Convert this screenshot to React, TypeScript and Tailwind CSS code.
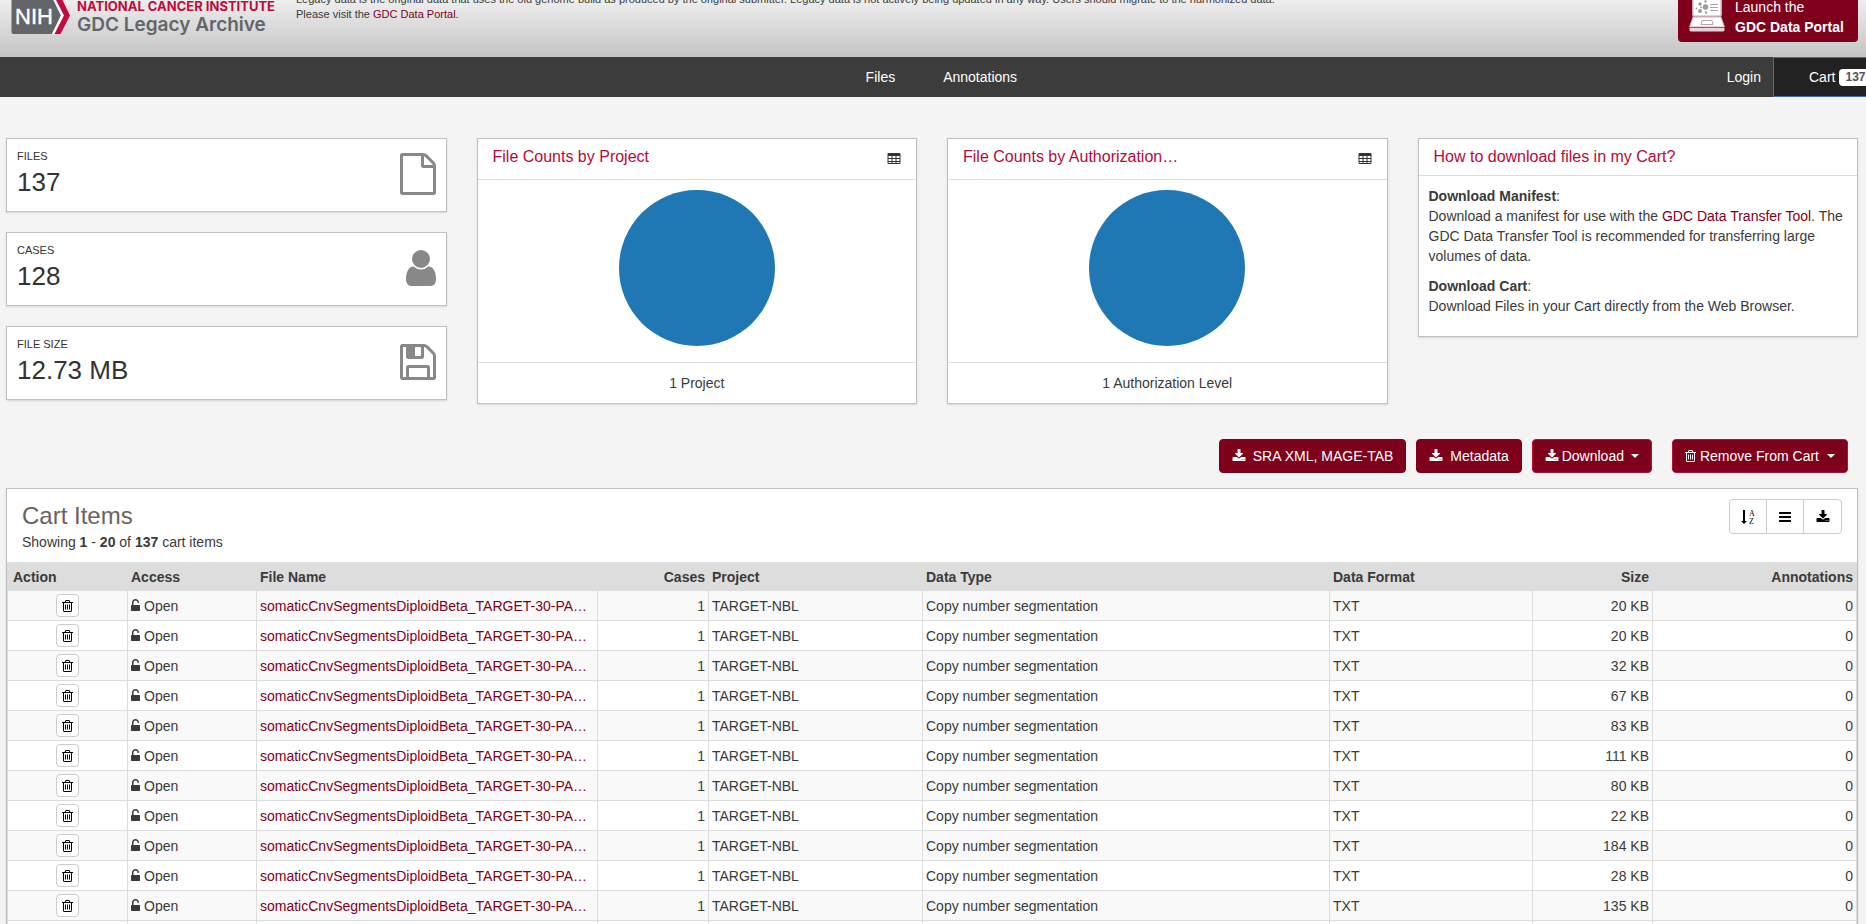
import type { ReactNode } from "react";

type IconProps = { path: string; viewBox?: string; className?: string };

function Icon({ path, viewBox = "0 0 1792 1792", className = "h-[14px] w-[14px]" }: IconProps) {
  return (
    <svg viewBox={viewBox} className={`${className} shrink-0`} fill="currentColor" aria-hidden="true">
      <path fillRule="evenodd" d={path} />
    </svg>
  );
}

const DOWNLOAD =
  "M1344 1344q0-26-19-45t-45-19-45 19-19 45 19 45 45 19 45-19 19-45zm256 0q0-26-19-45t-45-19-45 19-19 45 19 45 45 19 45-19 19-45zm128-224v320q0 40-28 68t-68 28h-1472q-40 0-68-28t-28-68v-320q0-40 28-68t68-28h465l135 136q58 56 136 56t136-56l136-136h464q40 0 68 28t28 68zm-325-569q17 41-14 70l-448 448q-18 19-45 19t-45-19l-448-448q-31-29-14-70 17-39 59-39h256v-448q0-26 19-45t45-19h256q26 0 45 19t19 45v448h256q42 0 59 39z";
const FILE =
  "M1596 380q28 28 48 76t20 88v1152q0 40-28 68t-68 28h-1344q-40 0-68-28t-28-68v-1600q0-40 28-68t68-28h896q40 0 88 20t76 48zm-444-244v376h376q-10-29-22-41l-313-313q-12-12-41-22zm384 1528v-1024h-416q-40 0-68-28t-28-68v-416h-768v1536h1280z";
const USER =
  "M1536 1399q0 109-62.5 187t-150.5 78h-854q-88 0-150.5-78t-62.5-187q0-85 8.5-160.5t31.5-152 58.5-131 94-89 134.5-34.5q131 128 313 128t313-128q76 0 134.5 34.5t94 89 58.5 131 31.5 152 8.5 160.5zm-256-887q0 159-112.5 271.5t-271.5 112.5-271.5-112.5-112.5-271.5 112.5-271.5 271.5-112.5 271.5 112.5 112.5 271.5z";
const FLOPPY =
  "M512 1536h768v-384h-768v384zm896 0h128v-896q0-14-10-38.5t-20-34.5l-281-281q-10-10-34-20t-39-10v416q0 40-28 68t-68 28h-576q-40 0-68-28t-28-68v-416h-128v1280h128v-416q0-40 28-68t68-28h832q40 0 68 28t28 68v416zm-384-928v-320q0-13-9.5-22.5t-22.5-9.5h-192q-13 0-22.5 9.5t-9.5 22.5v320q0 13 9.5 22.5t22.5 9.5h192q13 0 22.5-9.5t9.5-22.5zm640 32v928q0 40-28 68t-68 28h-1344q-40 0-68-28t-28-68v-1344q0-40 28-68t68-28h928q40 0 88 20t76 48l280 280q28 28 48 76t20 88z";
const TRASH =
  "M704 736v576q0 14-9 23t-23 9h-64q-14 0-23-9t-9-23v-576q0-14 9-23t23-9h64q14 0 23 9t9 23zm256 0v576q0 14-9 23t-23 9h-64q-14 0-23-9t-9-23v-576q0-14 9-23t23-9h64q14 0 23 9t9 23zm256 0v576q0 14-9 23t-23 9h-64q-14 0-23-9t-9-23v-576q0-14 9-23t23-9h64q14 0 23 9t9 23zm128 724v-948h-896v948q0 22 7 40.5t14.5 27 10.5 8.5h832q3 0 10.5-8.5t14.5-27 7-40.5zm-672-1076h448l-48-117q-7-9-17-11h-317q-10 2-17 11zm928 32v64q0 14-9 23t-23 9h-96v948q0 83-47 143.5t-113 60.5h-832q-66 0-113-58.5t-47-141.5v-952h-96q-14 0-23-9t-9-23v-64q0-14 9-23t23-9h309l70-167q15-37 54-63t79-26h320q40 0 79 26t54 63l70 167h309q14 0 23 9t9 23z";
const UNLOCK =
  "M1376 768q40 0 68 28t28 68v576q0 40-28 68t-68 28h-960q-40 0-68-28t-28-68v-576q0-40 28-68t68-28h32v-320q0-185 131.5-316.5t316.5-131.5 316.5 131.5 131.5 316.5q0 26-19 45t-45 19h-64q-26 0-45-19t-19-45q0-106-75-181t-181-75-181 75-75 181v320h736z";
const TABLE =
  "M224 128h1344q66 0 113 47t47 113v1088q0 66-47 113t-113 47h-1344q-66 0-113-47t-47-113v-1088q0-66 47-113t113-47zM192 512v256h384v-256zM704 512v256h384v-256zM1216 512v256h384v-256zM192 896v256h384v-256zM704 896v256h384v-256zM1216 896v256h384v-256zM192 1280v128h384v-128zM704 1280v128h384v-128zM1216 1280v128h384v-128z";
const BARS =
  "M192 1280h1408q64 0 64 64v128q0 64-64 64h-1408q-64 0-64-64v-128q0-64 64-64zM192 768h1408q64 0 64 64v128q0 64-64 64h-1408q-64 0-64-64v-128q0-64 64-64zM192 256h1408q64 0 64 64v128q0 64-64 64h-1408q-64 0-64-64v-128q0-64 64-64z";

const TRASH_BOX = "192 0 1408 1792";
const LINK = "text-[#7f001b] hover:underline";
const PANEL = "border border-[#c0c0c0] bg-white shadow-[0_1px_2px_rgba(0,0,0,0.12)]";

function SortAlphaIcon() {
  return (
    <svg viewBox="0 0 14 16" className="h-4 w-[14px]" fill="currentColor" aria-hidden="true">
      <path d="M2 1h2v11h2L3 15 0 12h2z" />
      <text x="8" y="7" fontSize="8" fontFamily="Liberation Serif, serif">A</text>
      <text x="8" y="15" fontSize="8" fontFamily="Liberation Serif, serif">Z</text>
    </svg>
  );
}

function Caret() {
  return (
    <svg viewBox="0 0 8 4" className="h-1 w-2 shrink-0" fill="currentColor" aria-hidden="true">
      <path d="M0 0h8L4 4z" />
    </svg>
  );
}

function NihMark() {
  return (
    <svg viewBox="0 -3 60 37" className="mb-[2px] h-[37px] w-[60px] shrink-0" aria-hidden="true">
      <path d="M2-3H41L50 15.500L41 34H2.500Q0.500 34 0.500 32V-1Q0.500-3 2-3z" fill="#636569" />
      <path d="M41-3L50 15.500L41 34H43.500L53 15.500L43.500-3z" fill="#fff" />
      <path d="M43.500-3H50L59 15.500L49.500 34H43.500L53 15.500z" fill="#c20a3c" />
      <text x="4" y="24" fontSize="22" fill="#fff" stroke="#fff" strokeWidth="0.4" fontFamily="Liberation Sans, sans-serif">
        NIH
      </text>
    </svg>
  );
}

function LaptopIcon() {
  return (
    <svg viewBox="0 0 36 42" className="h-[42px] w-9 shrink-0" aria-hidden="true">
      <rect x="3" y="2" width="30" height="25" rx="2" fill="#c9a9b1" />
      <rect x="4.500" y="3.500" width="27" height="22" fill="#fff" />
      <g fill="#9c9c9c">
        <circle cx="11" cy="14" r="1.800" />
        <circle cx="16.500" cy="17" r="2.700" />
        <circle cx="11" cy="21" r="2" />
        <circle cx="7.500" cy="18.500" r="1" />
        <circle cx="16.500" cy="11.500" r="1.200" />
        <circle cx="17" cy="22.500" r="1.200" />
        <circle cx="12" cy="17.500" r="1" />
      </g>
      <path d="M21 14.500h8M21 17.500h8M21 20.500h8" stroke="#a5a5a5" strokeWidth="1" />
      <path d="M4 27h28l3.500 10h-35z" fill="#fff" stroke="#c9a9b1" strokeWidth="1" />
      <path d="M13 30.500h10l1 4H12z" fill="#fff" stroke="#b8a0a6" strokeWidth="1" />
      <path d="M0.500 38h35v2q0 1.500-2 1.500h-31q-2 0-2-1.500z" fill="#e6d5d9" />
    </svg>
  );
}

function StatCard({ label, value, icon }: { label: string; value: string; icon: ReactNode }) {
  return (
    <div className={`${PANEL} flex justify-between px-[10px] pb-[14px] pt-[11px] text-[#333]`}>
      <div>
        <div className="text-[11px] leading-[12px]">{label}</div>
        <div className="pt-[5px] text-[26px] leading-[30px]">{value}</div>
      </div>
      <div className="pt-[3px] text-[#888]">{icon}</div>
    </div>
  );
}

function PieCard({ title, footer }: { title: string; footer: string }) {
  return (
    <section className={PANEL}>
      <header className="flex h-[41px] items-start justify-between border-b border-[#ddd] px-[15px]">
        <h2 className="pt-[7px] text-[16px] leading-[22px] text-[#b8093b]">{title}</h2>
        <button type="button" aria-label={`Show ${title} as table`} className="mt-[13px] text-[#333]">
          <Icon path={TABLE} />
        </button>
      </header>
      <div className="flex justify-center pb-4 pt-[10px]">
        <svg viewBox="0 0 156 156" className="h-[156px] w-[156px]" role="img" aria-label={footer}>
          <circle cx="78" cy="78" r="78" fill="#1f77b4" />
        </svg>
      </div>
      <footer className="border-t border-[#ddd] py-[10px] text-center">{footer}</footer>
    </section>
  );
}

const ACTION = "flex h-[34px] items-center rounded border bg-[#7f001b] px-3 text-white";

const SIZES = ["20 KB", "20 KB", "32 KB", "67 KB", "83 KB", "111 KB", "80 KB", "22 KB", "184 KB", "28 KB", "135 KB", "20 KB"];

const HEAD = "pl-1 pr-[3px]";
const CELL = "border-l border-[#ddd] px-[3px]";
const TOOL = "flex h-[33px] w-[37px] items-center justify-center";

export default function App() {
  return (
    <div className="h-screen overflow-hidden bg-[#f4f4f4] font-['Liberation_Sans',Arial,sans-serif] text-[14px] leading-5 text-[#3a3a3a]">
      <header className="flex h-[57px] items-end justify-between overflow-hidden bg-linear-to-b from-[#eee] to-[#c4c4c4] pl-[11px] pr-2">
        <div className="flex items-end">
          <a href="#home" className="flex w-[285px] items-end gap-[6px] pb-[21px] font-['Inter',sans-serif]">
            <NihMark />
            <span className="flex flex-col whitespace-nowrap">
              <span className="text-[13px] font-bold leading-[15px] text-[#c20a3c]">NATIONAL CANCER INSTITUTE</span>
              <span className="text-[19px] font-semibold leading-[22px] text-[#636569]">GDC Legacy Archive</span>
            </span>
          </a>
          <p className="pb-[35px] text-[11px] leading-[15px]">
            Legacy data is the original data that uses the old genome build as produced by the original submitter. Legacy data is not
            actively being updated in any way. Users should migrate to the harmonized data.
            <br />
            Please visit the <a href="#portal" className={LINK}>GDC Data Portal</a>.
          </p>
        </div>
        <a href="#launch" className="mb-[15px] flex w-[180px] items-end gap-[10px] rounded bg-[#7f001b] pl-[11px] text-white">
          <span className="pb-[10px]"><LaptopIcon /></span>
          <span className="pb-[5px]">
            Launch the<br />
            <b>GDC Data Portal</b>
          </span>
        </a>
      </header>

      <nav className="flex h-10 overflow-hidden bg-[#3c3c3c] text-white">
        <div className="flex flex-1 items-center justify-center gap-12 pl-4">
          <span className="flex-1" />
          <a href="#files">Files</a>
          <a href="#annotations">Annotations</a>
          <span className="flex-1" />
        </div>
        <div className="-ml-[140px] -mr-3 flex items-center">
          <a href="#login" className="pr-3">Login</a>
          <a href="#cart" className="flex h-10 w-[105px] items-center gap-1 border border-[#3f6fb5] bg-[#222] pl-[35px]">
            Cart
            <span className="mt-px rounded bg-white px-[6px] text-[12px] font-bold leading-[17px] text-[#555]">137</span>
          </a>
        </div>
      </nav>

      <main className="pl-[6px] pr-2 pt-[41px]">
        <div className="grid grid-cols-4 items-start gap-x-[30px]">
          <div className="flex flex-col gap-5">
            <StatCard label="FILES" value="137" icon={<Icon path={FILE} viewBox="128 0 1536 1792" className="h-[42px] w-9" />} />
            <StatCard label="CASES" value="128" icon={<Icon path={USER} viewBox="256 0 1280 1792" className="h-[42px] w-[30px]" />} />
            <StatCard label="FILE SIZE" value="12.73 MB" icon={<Icon path={FLOPPY} viewBox="128 0 1536 1792" className="h-[42px] w-9" />} />
          </div>
          <PieCard title="File Counts by Project" footer="1 Project" />
          <PieCard title="File Counts by Authorization…" footer="1 Authorization Level" />
          <section className={PANEL}>
            <h2 className="border-b border-[#ddd] px-[15px] py-[7px] text-[16px] leading-[22px] text-[#b8093b]">
              How to download files in my Cart?
            </h2>
            <div className="space-y-[10px] px-[10px] pb-5 pt-[10px]">
              <p>
                <b>Download Manifest</b>:<br />
                Download a manifest for use with the <a href="#tool" className={LINK}>GDC Data Transfer Tool</a>. The GDC Data
                Transfer Tool is recommended for transferring large volumes of data.
              </p>
              <p>
                <b>Download Cart</b>:<br />
                Download Files in your Cart directly from the Web Browser.
              </p>
            </div>
          </section>
        </div>

        <div className="mt-[35px] flex justify-end gap-[10px] pr-[10px]">
          <button type="button" className={`${ACTION} gap-[7px] border-[#7f001b]`}>
            <Icon path={DOWNLOAD} />SRA XML, MAGE-TAB
          </button>
          <button type="button" className={`${ACTION} gap-[7px] border-[#7f001b]`}>
            <Icon path={DOWNLOAD} />Metadata
          </button>
          <button type="button" className={`${ACTION} gap-[3px] border-[#b0103a]`}>
            <Icon path={DOWNLOAD} />Download<span className="ml-1"><Caret /></span>
          </button>
          <button type="button" className={`${ACTION} ml-[10px] gap-1 border-[#b0103a]`}>
            <Icon path={TRASH} viewBox={TRASH_BOX} className="h-[14px] w-[11px]" />Remove From Cart<span className="ml-1"><Caret /></span>
          </button>
        </div>

        <section className={`${PANEL} mt-[15px]`}>
          <div className="flex items-start justify-between px-[15px] pb-[10px] pt-[10px]">
            <div>
              <h1 className="pb-[3px] pt-1 text-[24px] leading-[26px] text-[#6b6262]">Cart Items</h1>
              <p>
                Showing <b>1</b> - <b>20</b> of <b>137</b> cart items
              </p>
            </div>
            <div className="flex divide-x divide-[#ccc] rounded border border-[#ccc] text-black">
              <button type="button" aria-label="Sort" className={TOOL}><SortAlphaIcon /></button>
              <button type="button" aria-label="Arrange columns" className={TOOL}><Icon path={BARS} /></button>
              <button type="button" aria-label="Export" className={TOOL}><Icon path={DOWNLOAD} /></button>
            </div>
          </div>
          <table className="w-full table-fixed border-separate border-spacing-0 text-left">
            <colgroup>
              <col className="w-[120px]" />
              <col className="w-[129px]" />
              <col className="w-[341px]" />
              <col className="w-[111px]" />
              <col className="w-[214px]" />
              <col className="w-[407px]" />
              <col className="w-[203px]" />
              <col className="w-[120px]" />
              <col className="w-[205px]" />
            </colgroup>
            <thead>
              <tr className="h-[29px] bg-[#ddd]">
                <th className="px-[6px]">Action</th>
                <th className={HEAD}>Access</th>
                <th className={HEAD}>File Name</th>
                <th className={`${HEAD} text-right`}>Cases</th>
                <th className={HEAD}>Project</th>
                <th className={HEAD}>Data Type</th>
                <th className={HEAD}>Data Format</th>
                <th className={`${HEAD} text-right`}>Size</th>
                <th className="px-1 text-right">Annotations</th>
              </tr>
            </thead>
            <tbody>
              {SIZES.map((size, i) => (
                <tr key={i} className="h-[30px] odd:bg-[#f9f9f9] [&>td]:border-b">
                  <td className={CELL}>
                    <button type="button" aria-label="Remove from cart" className="mx-auto flex h-[23px] w-[23px] items-center justify-center rounded border border-[#ccc] bg-white text-black">
                      <Icon path={TRASH} viewBox={TRASH_BOX} className="h-[14px] w-[11px]" />
                    </button>
                  </td>
                  <td className={CELL}>
                    <span className="flex items-center gap-1">
                      <Icon path={UNLOCK} viewBox="320 0 1152 1792" className="h-[14px] w-[9px]" />Open
                    </span>
                  </td>
                  <td className={`${CELL} truncate`}>
                    <a href="#file" className={LINK}>somaticCnvSegmentsDiploidBeta_TARGET-30-PA…</a>
                  </td>
                  <td className={`${CELL} text-right`}>1</td>
                  <td className={CELL}>TARGET-NBL</td>
                  <td className={CELL}>Copy number segmentation</td>
                  <td className={CELL}>TXT</td>
                  <td className={`${CELL} text-right`}>{size}</td>
                  <td className={`${CELL} border-r text-right`}>0</td>
                </tr>
              ))}
            </tbody>
          </table>
        </section>
      </main>
    </div>
  );
}
